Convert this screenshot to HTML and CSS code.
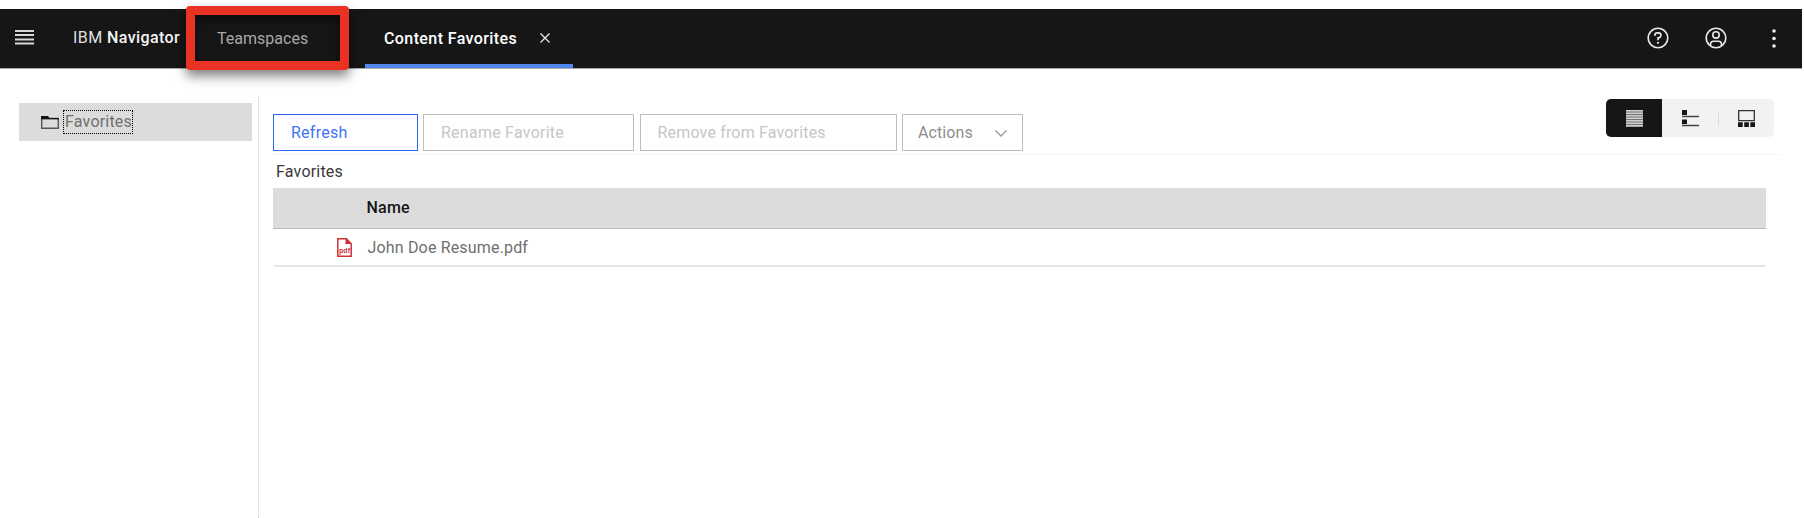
FILE: index.html
```html
<!DOCTYPE html>
<html lang="en">
<head>
<meta charset="utf-8">
<title>IBM Navigator</title>
<link rel="stylesheet" href="styles.css">
</head>
<body>
<header class="header">
  <svg class="menu" width="19" height="15" viewBox="0 0 19 15"><path d="M0 1h19M0 5h19M0 9.5h19M0 13.5h19" stroke="#d8d8d8" stroke-width="2"/></svg>
  <div class="brand">IBM <b>Navigator</b></div>
  <div class="tab tab-team">Teamspaces</div>
  <div class="tab tab-active"><span>Content Favorites</span><svg class="close" width="10" height="10" viewBox="0 0 10 10"><path d="M.5.5l9 9M9.5.5l-9 9" stroke="#e8e8e8" stroke-width="1.3"/></svg></div>
  <div class="tools">
    <svg width="22" height="22" viewBox="0 0 22 22" fill="none" stroke="#e8e8e8" stroke-width="1.6"><circle cx="11" cy="11" r="9.8"/><path d="M7.9 9V8.3a2.4 2.4 0 0 1 2.4-2.4h1.2a2.4 2.4 0 0 1 0 4.9H11v2.4"/><circle cx="11" cy="15.8" r="1.1" fill="#e8e8e8" stroke="none"/></svg>
    <svg width="22" height="22" viewBox="0 0 22 22" fill="none" stroke="#e8e8e8" stroke-width="1.6"><circle cx="11" cy="11" r="9.8"/><circle cx="11" cy="7.9" r="3.2"/><path d="M5.5 18.8v-1.5a3 3 0 0 1 3-3h5a3 3 0 0 1 3 3v1.5"/></svg>
    <svg class="more" width="4" height="19" viewBox="0 0 4 19" fill="#f0f0f0"><circle cx="2" cy="2" r="1.8"/><circle cx="2" cy="9.5" r="1.8"/><circle cx="2" cy="17" r="1.8"/></svg>
  </div>
</header>
<div class="callout"></div>
<div class="body">
  <nav class="side">
    <div class="side-item">
      <svg width="18" height="13" viewBox="0 0 18 13"><path d="M.7 2.5h16.6v9.8H.7z" fill="none" stroke="#555" stroke-width="1.4"/><path d="M0 0h7l1.6 1.9H18v1.4H0z" fill="#161616"/></svg>
      <span class="focus">Favorites</span>
    </div>
  </nav>
  <main class="main">
    <div class="toolbar">
      <div class="buttons">
        <button class="btn refresh">Refresh</button>
        <button class="btn rename">Rename Favorite</button>
        <button class="btn remove">Remove from Favorites</button>
        <button class="btn actions">Actions<svg width="12" height="7" viewBox="0 0 12 7"><path d="M.5.5L6 6 11.5.5" fill="none" stroke="#999" stroke-width="1.3"/></svg></button>
      </div>
      <div class="views">
        <div class="view view-on"><svg width="17" height="17" viewBox="0 0 17 17"><path d="M0 .8h17M0 3.3h17M0 5.8h17M0 8.3h17M0 10.8h17M0 13.3h17M0 15.8h17" stroke="#d0cfd0" stroke-width="1.9"/></svg></div>
        <div class="view"><svg width="17" height="17" viewBox="0 0 17 17"><path d="M0 0h5v5H0zM0 9.5h5v4.5H0z" fill="#161616"/><path d="M0 6.5h17M0 15.5h17" stroke="#444" stroke-width="1.3"/></svg></div>
        <i class="split"></i>
        <div class="view"><svg width="17" height="17" viewBox="0 0 17 17"><path d="M.7.7h15.6v10H.7z" fill="none" stroke="#333" stroke-width="1.3"/><path d="M0 12.3h4.7V17H0zM6.2 12.3h4.7V17H6.2zM12.3 12.3H17V17h-4.7z" fill="#161616"/></svg></div>
      </div>
    </div>
    <div class="crumb">Favorites</div>
    <div class="thead">Name</div>
    <div class="row">
      <svg width="15" height="19" viewBox="0 0 15 19"><path d="M.8.8h8.7l4.7 5v12.4H.8z" fill="#fff" stroke="#cf3339" stroke-width="1.5"/><path d="M8.5 0L15 6H8.5z" fill="#cf3339"/><text x="2" y="14.5" class="pdf" textLength="11">pdf</text></svg>
      <span>John Doe Resume.pdf</span>
    </div>
  </main>
</div>
</body>
</html>
```
FILE: styles.css
```css
* { box-sizing: border-box; }
body {
  margin: 0;
  padding-top: 9px;
  height: 518px;
  overflow: hidden;
  background: #fff;
  font: 16px Roboto, "Liberation Sans", sans-serif;
  color: #6f6f6f;
}
svg { display: block; flex: none; }
.header {
  display: flex;
  align-items: center;
  width: 1802px;
  height: 59px;
  background: #161616;
  box-shadow: 0 1px 0 #aaa;
  color: #fff;
  white-space: nowrap;
}
.menu { margin-left: 15px; margin-top: -3px; }
.brand { width: 144px; margin-left: 39px; margin-top: -3px; color: #e0e0e0; letter-spacing: .42px; }
.brand b { font-weight: 500; color: #f4f4f4; }
.tab-team { width: 148px; color: #a8a8a8; letter-spacing: .02px; }
.tab-active {
  display: flex;
  align-items: center;
  width: 208px;
  height: 59px;
  padding: 3px 0 0 19px;
  border-bottom: 4px solid #4f87ee;
  font-weight: 500;
  letter-spacing: .4px;
}
.tab-active span { width: 155.5px; }
.tools { display: flex; align-items: center; gap: 36px; margin-left: auto; margin-right: 26px; margin-top: -1px; }
.more { margin-left: 9px; }
.callout {
  position: absolute;
  left: 186px;
  top: 6px;
  width: 163px;
  height: 64px;
  border: 9px solid #e93223;
  border-radius: 4px;
  box-shadow: 0 6px 12px rgba(0, 0, 0, .5), inset 0 4px 8px rgba(0, 0, 0, .5);
}
.body { display: flex; height: 450px; padding: 29px 0 0 19px; }
.side { width: 240px; padding-top: 6px; border-right: 1px dotted #c8c8c8; }
.side-item {
  display: flex;
  align-items: center;
  gap: 4px;
  width: 233px;
  height: 38px;
  padding-left: 22px;
  background: #dcdcdc;
}
.focus { width: 70px; height: 24px; border: 1px dotted #000; line-height: 22px; margin-top: -1px; letter-spacing: .2px; padding-left: 1px; }
.main { width: 1507px; margin-left: 14px; }
.toolbar { display: flex; justify-content: space-between; height: 58px; border-bottom: 1px dotted #e6e6e6; }
.buttons { display: flex; gap: 5.5px; padding-top: 17px; }
.btn {
  display: flex;
  align-items: center;
  height: 37px;
  padding: 0 0 0 17px;
  border: 1px solid #bebebe;
  background: #fff;
  color: #c6c6c6;
  font: inherit;
  letter-spacing: .25px;
  white-space: nowrap;
}
.refresh { width: 144.5px; border-color: #2b67f0; color: #3f74f2; }
.rename { width: 211px; }
.remove { width: 257px; letter-spacing: .17px; }
.actions { width: 120.5px; padding: 0 15px; justify-content: space-between; color: #8d8d8d; letter-spacing: .1px; }
.actions svg { margin-top: 2px; }
.views { display: flex; align-items: center; width: 168px; height: 38px; margin: 2px 6px 0 0; background: #f2f2f2; border-radius: 5px; overflow: hidden; }
.view { display: flex; align-items: center; justify-content: center; width: 56px; height: 38px; }
.view-on { background: #161616; }
.split { width: 1px; height: 15px; margin: 0 -1px 0 0; background: #ddd; }
.crumb { height: 33px; padding: 7px 0 0 3px; color: #393939; letter-spacing: .2px; }
.thead { width: 1493px; height: 41px; padding-left: 93.5px; background: #dcdcdc; border-bottom: 1px solid #bbb; line-height: 39px; color: #161616; font-weight: 500; letter-spacing: .2px; }
.row { display: flex; align-items: center; width: 1491px; height: 38px; margin-left: 1px; padding-left: 63px; border-bottom: 2px solid #e6e6e6; letter-spacing: .17px; }
.row span { margin-left: 15.5px; }
.pdf { font: bold 7px "Liberation Sans", sans-serif; fill: #cf3339; letter-spacing: 0; }
```
